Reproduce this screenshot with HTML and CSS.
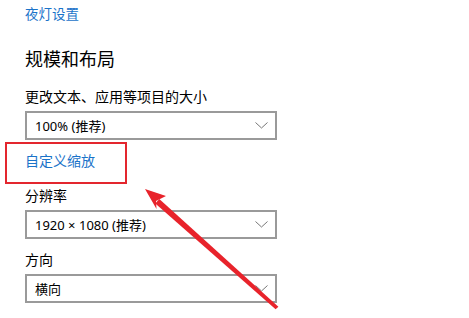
FILE: index.html
```html
<!DOCTYPE html>
<html lang="zh-CN">
<head>
<meta charset="utf-8">
<link rel="stylesheet" href="styles.css">
</head>
<body>
<div class="page">
  <a class="link link-top">夜灯设置</a>
  <h2 class="heading">规模和布局</h2>
  <div class="label label-scale">更改文本、应用等项目的大小</div>
  <div class="select"><span>100% (推荐)</span><svg class="chev" width="13" height="7" viewBox="0 0 13 7"><path d="M0.5 0.5 L6.5 6 L12.5 0.5" fill="none" stroke="#777" stroke-width="1"/></svg></div>
  <a class="link link-custom">自定义缩放</a>
  <div class="label label-res">分辨率</div>
  <div class="select"><span>1920 × 1080 (推荐)</span><svg class="chev" width="13" height="7" viewBox="0 0 13 7"><path d="M0.5 0.5 L6.5 6 L12.5 0.5" fill="none" stroke="#777" stroke-width="1"/></svg></div>
  <div class="label label-dir">方向</div>
  <div class="select"><span>横向</span><svg class="chev" width="13" height="7" viewBox="0 0 13 7"><path d="M0.5 0.5 L6.5 6 L12.5 0.5" fill="none" stroke="#777" stroke-width="1"/></svg></div>
</div>
<div class="redbox"></div>
<svg class="arrow" width="469" height="318" viewBox="0 0 469 318">
  <polygon points="275.6,309.2 278.4,306.8 159.3,199 155.3,203.4" fill="#e8232b"/>
  <polygon points="145,189 166,196 156,201 156.5,209" fill="#e8232b"/>
</svg>
</body>
</html>
```
FILE: styles.css
```css
html, body {
  margin: 0;
  padding: 0;
  background: #fff;
}
body {
  width: 469px;
  height: 318px;
  overflow: hidden;
  position: relative;
  font-family: "Noto Sans", "Noto Sans CJK SC", sans-serif;
  color: #000;
}
.page {
  padding-left: 25px;
  display: flex;
  flex-direction: column;
  align-items: flex-start;
}
.link {
  color: #1a73c9;
  font-family: "Noto Sans CJK SC", sans-serif;
  font-size: 14px;
  line-height: 20px;
  display: block;
}
.link-top {
  margin-top: 3px;
  font-size: 13.5px;
}
.heading {
  margin: 22px 0 0;
  font-family: "Noto Sans CJK SC", sans-serif;
  font-weight: normal;
  font-size: 18px;
  line-height: 26px;
}
.label {
  font-family: "Noto Sans CJK SC", sans-serif;
  font-size: 14px;
  line-height: 20px;
}
.label-scale { margin-top: 15px; }
.label-res { margin-top: 15px; }
.label-dir { margin-top: 10px; }
.select {
  box-sizing: border-box;
  width: 252px;
  height: 29px;
  border: 2px solid #9a9a9a;
  margin-top: 5px;
  display: flex;
  align-items: center;
  justify-content: space-between;
  padding: 0 7px 0 8px;
  font-size: 13px;
  color: #000;
}
.chev { display: block; }
.link-custom { margin-top: 10px; }
.redbox {
  position: absolute;
  left: 5px;
  top: 142px;
  width: 122px;
  height: 42px;
  box-sizing: border-box;
  border: 2px solid #e3262e;
}
.arrow {
  position: absolute;
  left: 0;
  top: 0;
}
```
